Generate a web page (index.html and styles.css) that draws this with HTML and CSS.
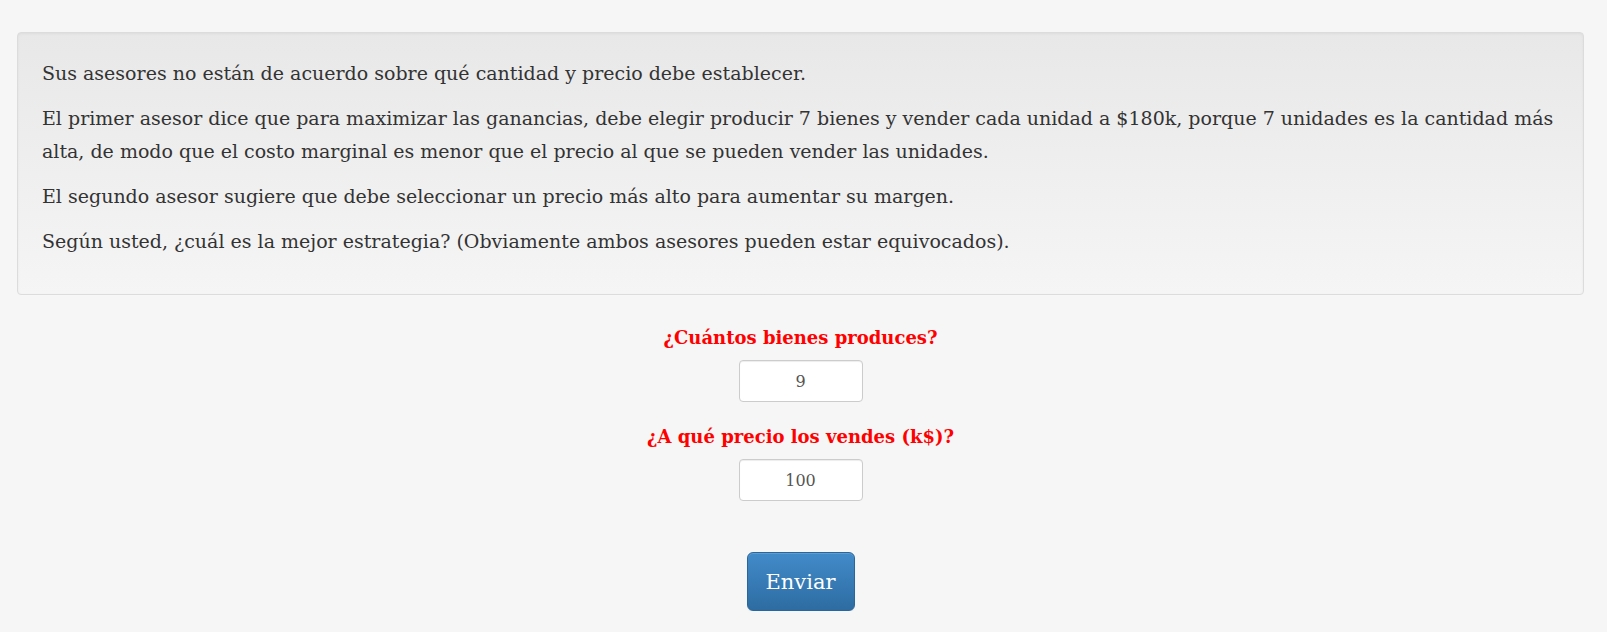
FILE: index.html
```html
<!DOCTYPE html>
<html lang="es">
<head>
<meta charset="utf-8">
<title>Estrategia</title>
<link rel="stylesheet" href="styles.css">
</head>
<body>
<div class="container">
  <div class="well">
    <p>Sus asesores no están de acuerdo sobre qué cantidad y precio debe establecer.</p>
    <p>El primer asesor dice que para maximizar las ganancias, debe elegir producir 7 bienes y vender cada unidad a $180k, porque 7 unidades es la cantidad más alta, de modo que el costo marginal es menor que el precio al que se pueden vender las unidades.</p>
    <p>El segundo asesor sugiere que debe seleccionar un precio más alto para aumentar su margen.</p>
    <p>Según usted, ¿cuál es la mejor estrategia? (Obviamente ambos asesores pueden estar equivocados).</p>
  </div>
  <form class="form">
    <label class="field-label" for="q">¿Cuántos bienes produces?</label>
    <input class="field-input" id="q" type="text" value="9">
    <label class="field-label second" for="p">¿A qué precio los vendes (k$)?</label>
    <input class="field-input" id="p" type="text" value="100">
    <button class="btn-submit" type="button">Enviar</button>
  </form>
</div>
</body>
</html>
```
FILE: styles.css
```css
html, body {
  margin: 0;
  padding: 0;
}
body {
  background: #f6f6f6;
  font-family: "DejaVu Serif", "Liberation Serif", serif;
  color: #333;
}
.container {
  padding: 32px 23px 0 17px;
}
.well {
  background: linear-gradient(to bottom, #e8e8e8 0%, #f5f5f5 100%);
  border: 1px solid #dcdcdc;
  border-radius: 4px;
  box-shadow: inset 0 1px 3px rgba(0,0,0,.05), 0 1px 0 rgba(255,255,255,.1);
  padding: 24px 24px 12px;
}
.well p {
  margin: 0 0 12px;
  font-size: 19px;
  line-height: 33px;
}
.well p:last-child {
  margin-bottom: 24px;
}
.form {
  display: flex;
  flex-direction: column;
  align-items: center;
}
.field-label {
  display: block;
  color: #ff0000;
  font-weight: bold;
  font-size: 18px;
  line-height: 26px;
  margin-top: 30px;
  margin-bottom: 9px;
}
.field-label.second {
  margin-top: 22px;
}
.field-input {
  box-sizing: border-box;
  width: 124px;
  height: 42px;
  border: 1px solid #ccc;
  border-radius: 4px;
  background: #fff;
  box-shadow: inset 0 1px 1px rgba(0,0,0,.075);
  text-align: center;
  font-family: "DejaVu Serif", "Liberation Serif", serif;
  font-size: 16px;
  color: #555;
  padding: 6px 10px;
}
.btn-submit {
  margin-top: 51px;
  box-sizing: border-box;
  height: 59px;
  padding: 0 18px;
  border: 1px solid #2b669a;
  border-radius: 6px;
  background: linear-gradient(to bottom, #428bca 0%, #2d6ca2 100%);
  color: #fff;
  font-family: "DejaVu Serif", "Liberation Serif", serif;
  font-size: 21px;
  box-shadow: inset 0 1px 0 rgba(255,255,255,.15), 0 1px 1px rgba(0,0,0,.075);
}
```
